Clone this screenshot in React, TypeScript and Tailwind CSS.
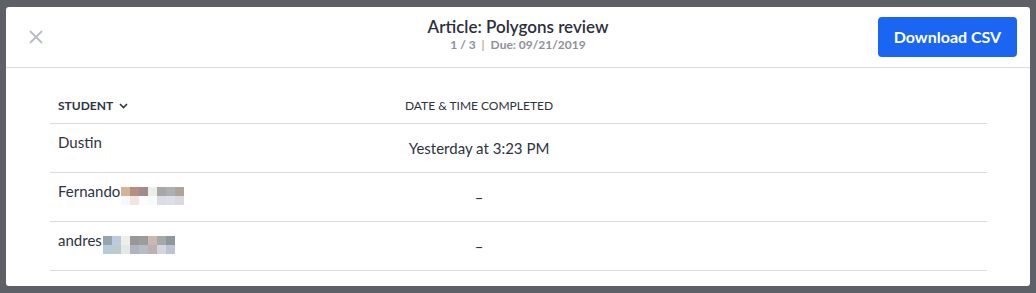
import React from "react";

type Row = {
  name: string;
  completed: string;
  blur?: [string[], string[]];
};

const rows: Row[] = [
  { name: "Dustin", completed: "Yesterday at 3:23 PM" },
  {
    name: "Fernando",
    completed: "–",
    blur: [
      ["#d4b494", "#b88e80", "#a08c8c", "#eceeea", "#a6a8aa", "#aeb0b0", "#b0a498"],
      ["#f6f8fc", "#f0e4e4", "#fcfcfc", "#f8fafa", "#dcdce4", "#dce0e6", "#dcd8e0"],
    ],
  },
  {
    name: "andres",
    completed: "–",
    blur: [
      ["#96a4ac", "#bccce0", "#eef0e6", "#9c9698", "#9a9e98", "#ccb8b0", "#a6aaa6", "#8e969e"],
      ["#b4ccd8", "#bccccc", "#e4e8e8", "#b0b4c0", "#b8bcc8", "#bcb0b0", "#d4d6dc", "#bcc4d4"],
    ],
  },
];

function Pixelated({ grid }: { grid: [string[], string[]] }) {
  return (
    <div className="mt-[6px] ml-px flex flex-col">
      {grid.map((line, i) => (
        <div key={i} className="flex">
          {line.map((c, j) => (
            <span key={j} className="block w-[9px] h-[9px]" style={{ backgroundColor: c }} />
          ))}
        </div>
      ))}
    </div>
  );
}

export default function App() {
  return (
    <div
      className="w-[1036px] h-[293px] bg-[#5e6068] pt-[7px] pl-[6px] overflow-hidden"
      style={{ fontFamily: "Lato, 'Open Sans', sans-serif" }}
    >
      <div className="w-[1024px] h-[279px] bg-white rounded-[3px] overflow-hidden">
        <div className="h-[61px] border-b border-[#dcdcdc] grid grid-cols-[1fr_auto_1fr] items-center">
          <div className="pl-[23px]">
            <button className="block w-[14px] h-[14px]" aria-label="Close">
              <svg width="14" height="14" viewBox="0 0 14 14" fill="none">
                <path d="M1 1L13 13M13 1L1 13" stroke="#b8bcc3" strokeWidth="1.8" />
              </svg>
            </button>
          </div>
          <div className="flex flex-col items-center -mt-[5px]">
            <h2 className="text-[17px] leading-[20px] font-semibold text-[#2b2f3a]">
              Article: Polygons review
            </h2>
            <p className="text-[12px] leading-[16px] font-bold text-[#8d9199]">
              1 / 3 <span className="mx-[3px] text-[#c4aa90]">|</span> Due: 09/21/2019
            </p>
          </div>
          <div className="flex justify-end pr-[13px]">
            <button className="w-[139px] h-[40px] rounded-[4px] bg-[#1a66f2] text-white text-[16px] font-bold">
              Download CSV
            </button>
          </div>
        </div>

        <div className="pl-[44px] pr-[43px]">
          <div className="h-[56px] border-b border-[#dcdcdc] flex items-end pb-[9px] text-[12px] leading-[16px] text-[#2d3340]">
            <div className="w-[329px] pl-[8px] flex items-center gap-[6px] font-bold">
              STUDENT
              <svg width="9" height="6" viewBox="0 0 9 6" fill="none">
                <path d="M1 1L4.5 4.5L8 1" stroke="#2d3340" strokeWidth="1.6" />
              </svg>
            </div>
            <div className="w-[200px] text-center">DATE &amp; TIME COMPLETED</div>
          </div>
          {rows.map((r) => (
            <div
              key={r.name}
              className="h-[49px] border-b border-[#dcdcdc] flex text-[15px] leading-[20px] text-[#2d3340]"
            >
              <div className="w-[329px] pl-[8px] pt-[8px] flex items-start">
                <span>{r.name}</span>
                {r.blur && <Pixelated grid={r.blur} />}
              </div>
              <div className="w-[200px] flex items-center justify-center">{r.completed}</div>
            </div>
          ))}
        </div>
      </div>
    </div>
  );
}
